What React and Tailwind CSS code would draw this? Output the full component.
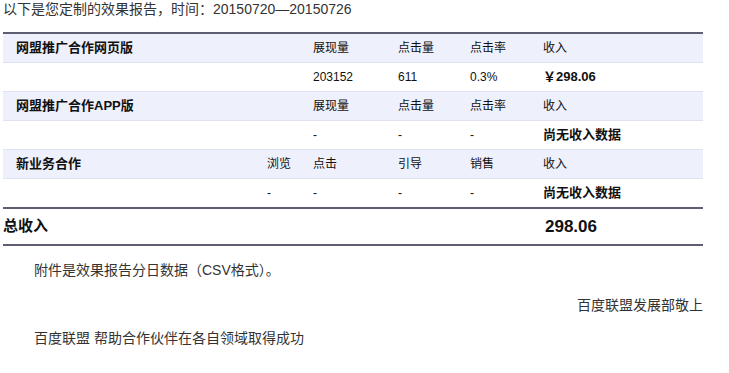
import React from "react";

const F = { fontFamily: '"Liberation Sans","Noto Sans CJK SC",sans-serif' };

function Row({ cells, head, last }) {
  return (
    <div
      className={`grid grid-cols-[251px_46px_85px_72px_73px_1fr] items-center text-[12px] text-[#111] ${
        head ? "bg-[#eef0fb]" : "bg-white"
      } ${last ? "h-[30px] border-b-2 border-[#5e5e72]" : "h-[29px] border-b border-[#dfe2f2]"}`}
    >
      {cells.map((c, i) => (
        <div
          key={i}
          className={`pl-[13px] whitespace-nowrap ${c && c.b ? "font-bold text-[13px]" : ""}`}
        >
          {c ? (typeof c === "string" ? c : c.t) : ""}
        </div>
      ))}
    </div>
  );
}

export default function App() {
  return (
    <div className="w-[729px] h-[373px] bg-white px-[3px] text-[#333]" style={F}>
      <div className="h-[18px] leading-[18px] text-[14px] text-[#333]">
        以下是您定制的效果报告，时间：20150720—20150726
      </div>
      <div className="w-[700px] mt-[14px] border-t-2 border-[#5e5e72]">
        <Row head cells={[{ t: "网盟推广合作网页版", b: 1 }, "", "展现量", "点击量", "点击率", "收入"]} />
        <Row cells={["", "", "203152", "611", "0.3%", { t: "￥298.06", b: 1 }]} />
        <Row head cells={[{ t: "网盟推广合作APP版", b: 1 }, "", "展现量", "点击量", "点击率", "收入"]} />
        <Row cells={["", "", "-", "-", "-", { t: "尚无收入数据", b: 1 }]} />
        <Row head cells={[{ t: "新业务合作", b: 1 }, "浏览", "点击", "引导", "销售", "收入"]} />
        <Row last cells={["", "-", "-", "-", "-", { t: "尚无收入数据", b: 1 }]} />
        <div className="grid grid-cols-[527px_1fr] h-[37px] items-center border-b-2 border-[#5e5e72]">
          <div className="text-[15px] font-bold text-[#111]">总收入</div>
          <div className="pl-[15px] text-[17px] font-bold text-[#111]">298.06</div>
        </div>
      </div>
      <div className="pl-[31px] pt-[16px] text-[14px] leading-[16px] text-[#333]">
        附件是效果报告分日数据（CSV格式）。
      </div>
      <div className="w-[700px] text-right pt-[19px] text-[14px] leading-[16px] text-[#333]">
        百度联盟发展部敬上
      </div>
      <div className="pl-[31px] pt-[17px] text-[14px] leading-[16px] text-[#333]">
        百度联盟 帮助合作伙伴在各自领域取得成功
      </div>
    </div>
  );
}
